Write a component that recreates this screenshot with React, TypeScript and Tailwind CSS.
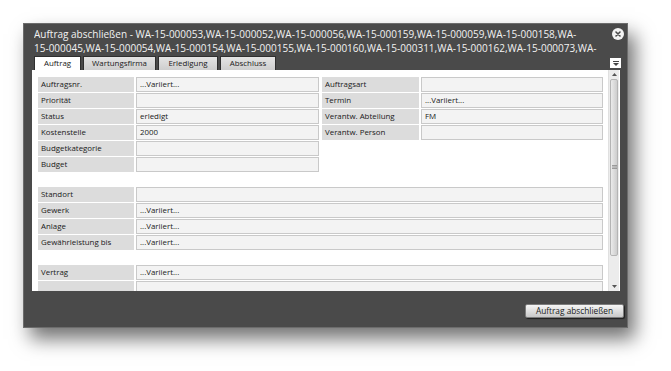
import React from "react";

const LINE_1 =
  "Auftrag abschließen - WA-15-000053,WA-15-000052,WA-15-000056,WA-15-000159,WA-15-000059,WA-15-000158,WA-";
const LINE_2 =
  "15-000045,WA-15-000054,WA-15-000154,WA-15-000155,WA-15-000160,WA-15-000311,WA-15-000162,WA-15-000073,WA-";

function Field({
  label,
  value,
  labelW,
  valueW,
}: {
  label: string;
  value?: string;
  labelW: string;
  valueW?: string;
}) {
  return (
    <div className="flex gap-[2px] h-[15px]">
      <div
        className={`${labelW} shrink-0 bg-[#dcdcdc] pl-[3px] text-[7.9px] leading-[15px] text-[#1a1a1a] whitespace-nowrap`}
      >
        {label}
      </div>
      <div
        className={`${valueW ?? "flex-1"} bg-[#f3f3f3] border border-[#c9c9c9] pl-[3px] text-[7.9px] leading-[13px] text-[#1a1a1a] whitespace-nowrap`}
      >
        {value}
      </div>
    </div>
  );
}

function Tab({ label, width, active }: { label: string; width: string; active?: boolean }) {
  return (
    <div
      className={`${width} h-[14px] border border-[#2f2f2f] border-b-0 text-center text-[7.9px] leading-[13px] text-[#1a1a1a] ${
        active ? "bg-white" : "bg-linear-to-b from-[#e4e4e4] to-[#cecece]"
      }`}
    >
      {label}
    </div>
  );
}

function Scrollbar() {
  return (
    <div className="w-[11px] mr-[1px] shrink-0 flex flex-col bg-[#ececec] border-l border-[#e0e0e0]">
      {/* up arrow */}
      <div className="h-[9px] flex items-center justify-center">
        <svg width="5" height="3" viewBox="0 0 5 3">
          <path d="M0 3 L2.5 0 L5 3 Z" fill="#555" />
        </svg>
      </div>
      {/* thumb */}
      <div className="h-[177px] mx-[1px] rounded-[2px] border border-[#b4b4b4] bg-linear-to-r from-[#ebebeb] to-[#cdcdcd] flex items-center justify-center">
        <svg width="5" height="5" viewBox="0 0 5 5">
          <path d="M0 0.5 H5 M0 2 H5 M0 3.5 H5" stroke="#8a8a8a" strokeWidth="0.8" />
        </svg>
      </div>
      <div className="flex-1" />
      {/* down arrow */}
      <div className="h-[10px] flex items-center justify-center">
        <svg width="5" height="3" viewBox="0 0 5 3">
          <path d="M0 0 L2.5 3 L5 0 Z" fill="#555" />
        </svg>
      </div>
    </div>
  );
}

export default function App() {
  return (
    <div className="w-[671px] h-[371px] bg-white pl-[23px] pt-[23px] overflow-hidden font-['Open_Sans',sans-serif]">
      <div className="w-[605px] h-[305px] bg-[#4a4a4a] border border-[#6c6c6c] shadow-[7px_11px_18px_rgba(0,0,0,0.55)] flex flex-col">
        {/* Title */}
        <div className="h-[32px] flex items-start pl-[10px] pr-[3px] pt-[3px]">
          <div className="flex-1 overflow-hidden whitespace-nowrap text-[10px] leading-[14px] text-[#f2f2f2]">
            <div>{LINE_1}</div>
            <div>{LINE_2}</div>
          </div>
          <svg width="12" height="12" viewBox="0 0 12 12" className="mt-[1px] shrink-0">
            <circle cx="6" cy="6" r="6" fill="#f4f4f4" />
            <path d="M4 4 L8 8 M8 4 L4 8" stroke="#4a4a4a" strokeWidth="1.6" strokeLinecap="round" />
          </svg>
        </div>

        {/* Tabs */}
        <div className="h-[14px] flex items-end gap-[2px] pl-[10px] pr-[6px]">
          <Tab label="Auftrag" width="w-[47px]" active />
          <Tab label="Wartungsfirma" width="w-[73px]" />
          <Tab label="Erledigung" width="w-[60px]" />
          <Tab label="Abschluss" width="w-[56px]" />
          <div className="ml-auto self-start mt-[2px] w-[11px] h-[10px] bg-white flex flex-col items-center justify-center gap-[1px]">
            <div className="w-[6px] h-[1px] bg-[#444]" />
            <svg width="6" height="3" viewBox="0 0 6 3">
              <path d="M0 0 L3 3 L6 0 Z" fill="#444" />
            </svg>
          </div>
        </div>

        {/* Panel */}
        <div className="h-[221px] ml-[8px] mr-[7px] bg-white flex overflow-hidden">
          <div className="flex-1 pl-[6px] pr-[5px] pt-[7px] flex flex-col">
            <div className="flex gap-[3px]">
              <div className="flex flex-col gap-[1px]">
                <Field label="Auftragsnr." value="...Variiert..." labelW="w-[96px]" valueW="w-[183px]" />
                <Field label="Priorität" labelW="w-[96px]" valueW="w-[183px]" />
                <Field label="Status" value="erledigt" labelW="w-[96px]" valueW="w-[183px]" />
                <Field label="Kostenstelle" value="2000" labelW="w-[96px]" valueW="w-[183px]" />
                <Field label="Budgetkategorie" labelW="w-[96px]" valueW="w-[183px]" />
                <Field label="Budget" labelW="w-[96px]" valueW="w-[183px]" />
              </div>
              <div className="flex-1 flex flex-col gap-[1px]">
                <Field label="Auftragsart" labelW="w-[97px]" />
                <Field label="Termin" value="...Variiert..." labelW="w-[97px]" />
                <Field label="Verantw. Abteilung" value="FM" labelW="w-[97px]" />
                <Field label="Verantw. Person" labelW="w-[97px]" />
              </div>
            </div>

            <div className="mt-[15px] flex flex-col gap-[1px]">
              <Field label="Standort" labelW="w-[96px]" />
              <Field label="Gewerk" value="...Variiert..." labelW="w-[96px]" />
              <Field label="Anlage" value="...Variiert..." labelW="w-[96px]" />
              <Field label="Gewährleistung bis" value="...Variiert..." labelW="w-[96px]" />
            </div>

            <div className="mt-[15px] flex flex-col gap-[1px]">
              <Field label="Vertrag" value="...Variiert..." labelW="w-[96px]" />
              <Field label="" labelW="w-[96px]" />
            </div>
          </div>
          <Scrollbar />
        </div>

        {/* Footer */}
        <div className="flex-1 flex justify-end items-start pt-[13px] pr-[3px]">
          <button className="w-[99px] h-[14px] rounded-[2px] border border-[#7c7c7c] bg-linear-to-b from-[#f6f6f6] to-[#c8c8c8] shadow-[1px_1px_1px_rgba(0,0,0,0.6)] text-[8.3px] leading-[12px] text-[#1a1a1a]">
            Auftrag abschließen
          </button>
        </div>
      </div>
    </div>
  );
}
